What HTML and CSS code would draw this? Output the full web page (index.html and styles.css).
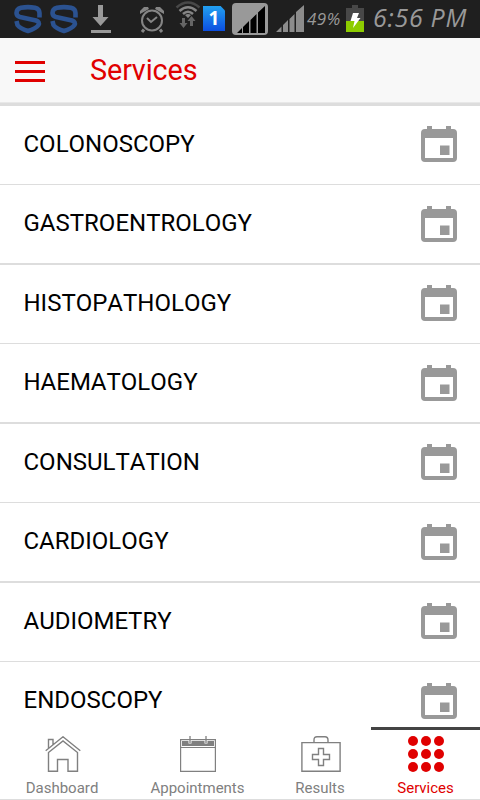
FILE: index.html
```html
<!DOCTYPE html>
<html lang="en">
<head>
    <meta charset="UTF-8">
    <meta name="viewport" content="width=device-width, initial-scale=1.0">
    <title>Services</title>
    <link rel="stylesheet" href="styles.css">
</head>
<body>
    <svg width="0" height="0" class="defs">
        <symbol id="calendar" viewBox="0 0 36 36">
            <path fill="#999" fill-rule="evenodd" d="M6 0h5v3h14V0h5v3h2a4 4 0 0 1 4 4v25a4 4 0 0 1-4 4H4a4 4 0 0 1-4-4V7a4 4 0 0 1 4-4h2zM4 12v20h28V12zM19 19.500h9.500V29H19z"/>
        </symbol>
        <symbol id="shield" viewBox="0 0 28 30">
            <path fill="none" stroke="#2b5290" stroke-width="4.600" stroke-linejoin="round" d="M25.500 13.500V9Q25.500 5 21 3.800Q14 2.500 7 3.800Q2.500 5 2.500 9Q2.500 12 6 13L22 16.500Q26 18 24.500 21Q22 24.500 14 27Q6 24.500 3.500 21L2.500 17"/>
        </symbol>
    </svg>

    <div class="status">
        <svg class="shield" width="28" height="30"><use href="#shield"/></svg>
        <svg class="shield" width="28" height="30"><use href="#shield"/></svg>
        <svg class="download" width="20" height="28" viewBox="0 0 20 28">
            <path fill="#999" d="M7 0h5v12h5.500L9.500 21 1.500 12H7zM0 25h20v3H0z"/>
        </svg>
        <svg class="alarm" width="26" height="27" viewBox="0 0 26 27" fill="none" stroke="#858585" stroke-width="2">
            <circle cx="13" cy="14.500" r="10"/>
            <path d="M8 12l4 4 6-5"/>
            <path stroke-width="3" d="M5 23.500l-2 2.500M21 23.500l2 2.500"/>
            <path fill="#858585" stroke="none" d="M1 8V5l4-4h4l1 2zM25 8V5l-4-4h-4l-1 2z"/>
        </svg>
        <svg class="wifi" width="26" height="28" viewBox="0 0 26 28" fill="none" stroke-width="2.500">
            <path stroke="#484848" d="M1.500 6.500Q13-3.500 24.500 6.500"/>
            <path stroke="#858585" d="M4.500 10Q13 2.500 21.500 10M8 13Q13 8.500 18 13"/>
            <path fill="#858585" d="M10 14Q13 12 16 14L13 17z"/>
            <path fill="#666" d="M7 17h3v5h2.500L8.500 27l-4-5H7zM15 25h3v-5h2.500L16.500 15l-4 5H15z"/>
        </svg>
        <div class="sim">1</div>
        <svg class="signal-box" width="36" height="32" viewBox="0 0 36 32">
            <rect width="36" height="32" rx="4" fill="#999"/>
            <path d="M5 30h5v-5zM11 30h6V18l-6 6zM18.500 30h6V11l-6 6zM26 30h7V3l-7 6.500z"/>
        </svg>
        <svg class="signal" width="28" height="27" viewBox="0 0 28 27">
            <path fill="#8c8c8c" d="M0 27h5.500v-5.500zM7 27h5v-12l-5 5zM13.500 27h5V9l-5 5zM20 27h8V0l-8 7z"/>
        </svg>
        <span class="percent">49%</span>
        <svg class="battery" width="18" height="27" viewBox="0 0 18 27">
            <path fill="#484848" d="M6 0h6v3h6v13H0V3h6z"/>
            <path fill="#8dcc00" d="M0 16h18v11H0z"/>
            <path fill="#fff" d="M7 8h6l-2 5h3.500L7 23l1.500-7H4.500z"/>
        </svg>
        <span class="time">6:56 PM</span>
    </div>

    <header class="header">
        <div class="menu"><i></i><i></i><i></i></div>
        <h1>Services</h1>
    </header>

    <ul class="list">
        <li><span>COLONOSCOPY</span><svg class="cal"><use href="#calendar"/></svg></li>
        <li><span>GASTROENTROLOGY</span><svg class="cal"><use href="#calendar"/></svg></li>
        <li><span>HISTOPATHOLOGY</span><svg class="cal"><use href="#calendar"/></svg></li>
        <li><span>HAEMATOLOGY</span><svg class="cal"><use href="#calendar"/></svg></li>
        <li><span>CONSULTATION</span><svg class="cal"><use href="#calendar"/></svg></li>
        <li><span>CARDIOLOGY</span><svg class="cal"><use href="#calendar"/></svg></li>
        <li><span>AUDIOMETRY</span><svg class="cal"><use href="#calendar"/></svg></li>
        <li><span>ENDOSCOPY</span><svg class="cal"><use href="#calendar"/></svg></li>
    </ul>

    <nav class="tabs">
        <a class="tab">
            <svg class="home" width="36" height="36" viewBox="0 0 36 36" fill="none" stroke="#808080" stroke-width="1.400">
                <path d="M.7 14.800L18 .8l17.300 14M3.500 16.500L18 5l14.500 11.500v18.800h-9.500V23.500H12.500v11.800h-9zM3.500 12V3.500h4.500v5"/>
            </svg>
            <span>Dashboard</span>
        </a>
        <a class="tab">
            <svg width="36" height="36" viewBox="0 0 36 36" fill="none" stroke="#808080">
                <path d="M.6 3.600h34.800v31.800H.6zM.6 11.500h34.800" stroke-width="1.200"/>
                <path fill="#808080" stroke="none" d="M2 5h32v5H2z"/>
                <path stroke="#fff" stroke-width="3" d="M10 4.500v3M26 4.500v3"/>
                <path stroke-width="1.300" d="M10 0v7M26 0v7"/>
            </svg>
            <span>Appointments</span>
        </a>
        <a class="tab results">
            <svg width="40" height="36" viewBox="0 0 40 36" fill="none" stroke="#808080" stroke-width="1.400">
                <path d="M.9 6.600h38.200v28.700H.9zM13 6.500V4Q13 .7 16 .7h8Q27 .7 27 4v2.500M17.500 12.500h5v6h6v5h-6v6h-5v-6h-6v-5h6z"/>
            </svg>
            <span>Results</span>
        </a>
        <a class="tab active">
            <svg width="36" height="36" viewBox="0 0 36 36" fill="#e00000">
                <circle cx="5" cy="5" r="5"/><circle cx="18" cy="5" r="5"/><circle cx="31" cy="5" r="5"/>
                <circle cx="5" cy="18" r="5"/><circle cx="18" cy="18" r="5"/><circle cx="31" cy="18" r="5"/>
                <circle cx="5" cy="31" r="5"/><circle cx="18" cy="31" r="5"/><circle cx="31" cy="31" r="5"/>
            </svg>
            <span>Services</span>
        </a>
    </nav>
</body>
</html>
```

FILE: styles.css
```css
* {
    box-sizing: border-box;
}

body {
    margin: 0;
    height: 800px;
    display: flex;
    flex-direction: column;
    overflow: hidden;
    background: #fff;
    font-family: Roboto, sans-serif;
    font-kerning: none;
}

svg {
    display: block;
    flex: none;
}

.defs {
    display: none;
}

/* status bar */
.status {
    height: 38px;
    flex: none;
    display: flex;
    align-items: flex-start;
    padding-left: 14px;
    background: #1f1f1f;
    color: #999;
    white-space: nowrap;
}

.shield {
    margin: 4px 8px 0 0;
}

.download {
    margin: 5px 28px 0 5px;
}

.alarm {
    margin: 6px 10px 0 0;
}

.wifi {
    margin: 1px 2px 0 0;
}

.sim {
    width: 22px;
    height: 25px;
    margin: 6px 7px 0 0;
    background: linear-gradient(#22a0f0, #0c4ee0);
    clip-path: polygon(0 0, 80% 0, 100% 18%, 100% 100%, 0 100%);
    color: #fff;
    font: bold 19px/25px "Noto Sans", sans-serif;
    text-align: center;
}

.signal-box {
    margin: 3px 8px 0 0;
}

.signal {
    margin: 5px 3px 0 0;
}

.percent {
    width: 36px;
    margin-right: 3px;
    font: italic 400 17px/38px "Open Sans", sans-serif;
    letter-spacing: 0.5px;
}

.battery {
    margin: 5px 9px 0 0;
}

.time {
    font: italic 400 25px/34px "Open Sans", sans-serif;
    letter-spacing: 0.7px;
}

/* title bar */
.header {
    height: 68px;
    flex: none;
    display: flex;
    padding: 0 15px;
    background: #f8f8f8;
    border-bottom: 3px solid #ddd;
    box-shadow: inset 0 -1px #e8e8e8;
}

.menu {
    width: 30px;
    margin: 23px 45px 0 0;
    display: flex;
    flex-direction: column;
    gap: 6px;
}

.menu i {
    height: 3px;
    background: #e00000;
}

h1 {
    margin: 0;
    color: #e00000;
    font-size: 28.800px;
    font-weight: 400;
    line-height: 64px;
    letter-spacing: -0.1px;
}

/* services */
.list {
    flex: 1;
    min-height: 0;
    overflow: hidden;
    margin: 0;
    padding: 0;
    list-style: none;
}

.list li {
    height: 79px;
    display: flex;
    align-items: flex-start;
    justify-content: space-between;
    padding: 0 23px 0 23.5px;
    border-bottom: 1px solid #ddd;
    font-size: 24px;
    line-height: 77px;
}

.list li:nth-child(even) {
    height: 80px;
    border-bottom-width: 2px;
}

.cal {
    width: 36px;
    height: 36px;
    margin-top: 20px;
}

.list li:nth-child(even) .cal {
    margin-top: 21px;
}

/* bottom tabs */
.tabs {
    height: 73px;
    flex: none;
    display: grid;
    grid-template-columns: 124px 147px 100px 109px;
    border-bottom: 1px solid #ddd;
}

.tab {
    display: flex;
    flex-direction: column;
    align-items: center;
    padding-top: 6px;
    border-top: 3px solid transparent;
    color: #808080;
    font-size: 15px;
    line-height: 18px;
}

.tab span {
    margin-top: 7px;
}

.home {
    margin-left: 2px;
}

.results span {
    margin-right: 2px;
}

.tab.active {
    border-top-color: #444;
    color: #e00000;
}
```
